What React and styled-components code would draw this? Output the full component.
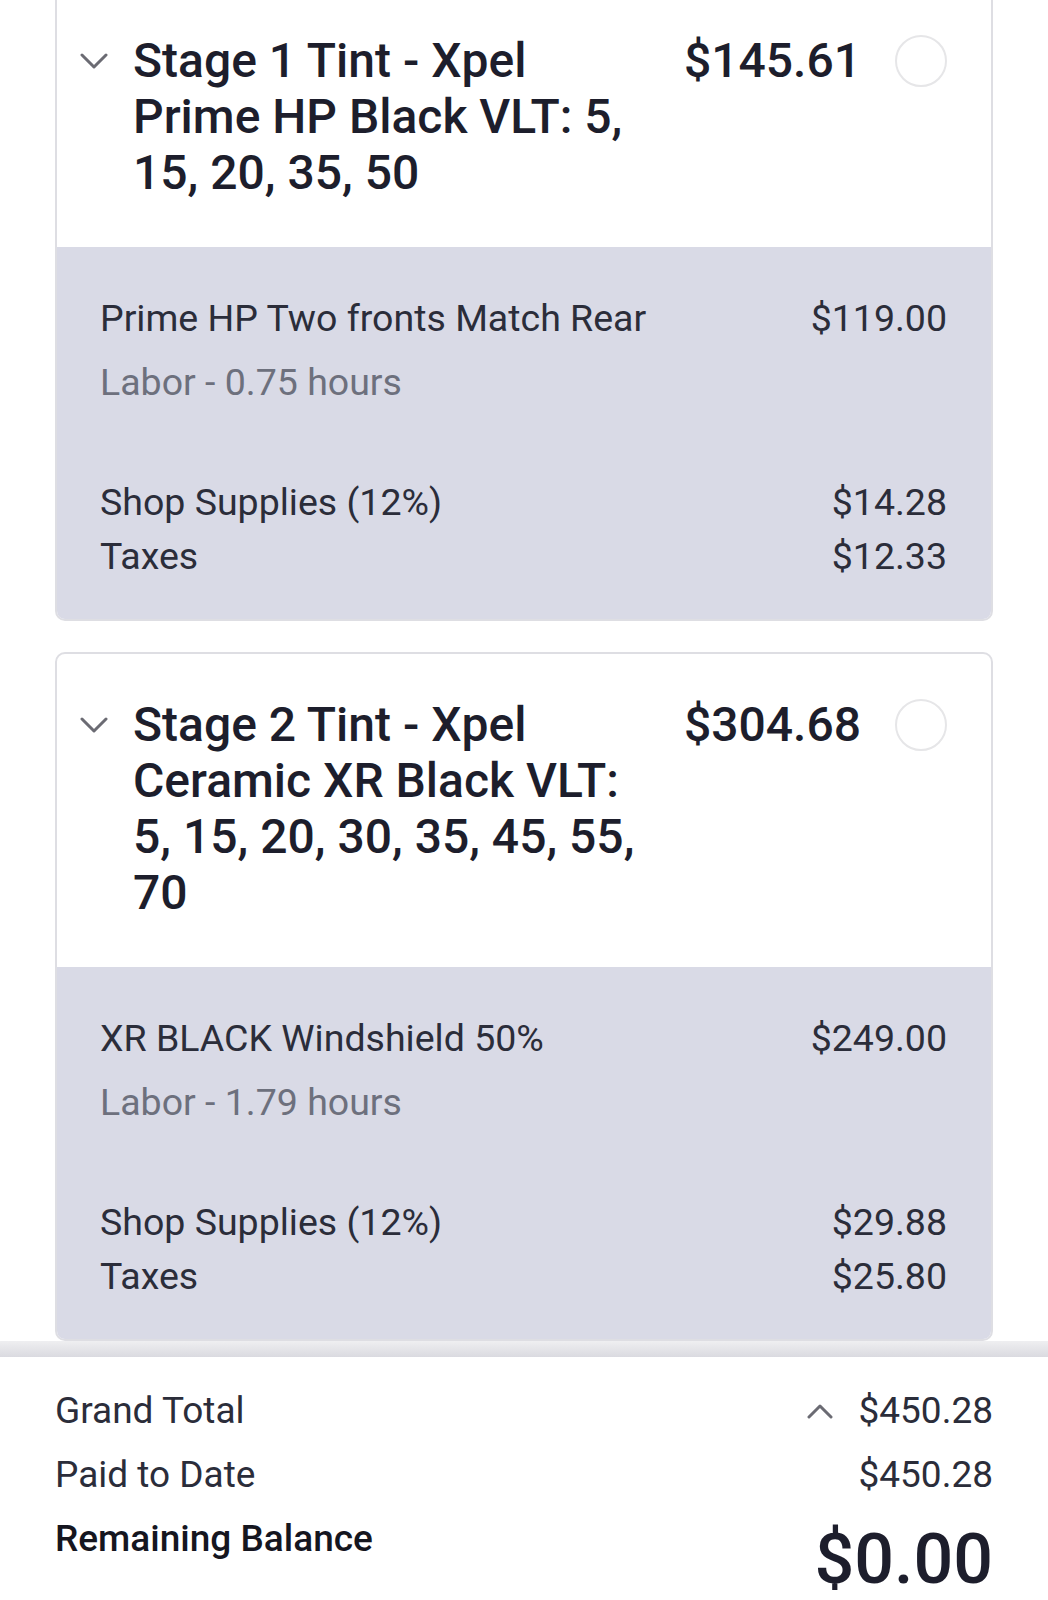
import React from 'react';
import styled, { createGlobalStyle } from 'styled-components';

const GlobalStyle = createGlobalStyle`
  body {
    margin: 0;
    background: #fff;
    font-family: 'Roboto', 'Liberation Sans', sans-serif;
    color: #2b2d3a;
  }
`;

const Page = styled.div`
  width: 1048px;
  min-height: 1600px;
  overflow: hidden;
  display: flex;
  flex-direction: column;
`;

const List = styled.div`
  display: flex;
  flex-direction: column;
  gap: 31px;
  padding: 0 55px;
  margin-top: -12px;
`;

const Card = styled.div`
  border: 2px solid #dedee3;
  border-radius: 10px;
  overflow: hidden;
  background: #fff;
`;

const Header = styled.div`
  display: flex;
  align-items: flex-start;
  padding: 43px 44px 46px 23px;
`;

const Chevron = styled.div`
  width: 28px;
  height: 56px;
  display: flex;
  align-items: center;
  justify-content: center;
  margin-right: 25px;
  color: #6b6b73;
`;

const Title = styled.div`
  flex: 0 0 512px;
  font-size: 48px;
  line-height: 56px;
  font-weight: 500;
  color: #1d1e2c;
`;

const Price = styled.div`
  margin-left: auto;
  font-size: 48px;
  line-height: 56px;
  font-weight: 500;
  color: #1d1e2c;
`;

const Radio = styled.div`
  width: 48px;
  height: 48px;
  border: 2px solid #e6e6e8;
  border-radius: 50%;
  margin: 2px 0 0 34px;
  flex-shrink: 0;
`;

const Body = styled.div`
  background: #d9dae6;
  padding: 49px 44px 36px 43px;
`;

const Row = styled.div`
  display: flex;
  justify-content: space-between;
  font-size: 37.5px;
  line-height: ${(p) => (p.$tight ? '54px' : '44px')};
  color: ${(p) => (p.$muted ? '#6d707d' : '#2b2d3a')};
  margin-top: ${(p) => p.$gap || 0}px;
`;

const Footer = styled.div`
  padding: 48px 55px 0;
  background: linear-gradient(#efeff1, #dadae0) top / 100% 16px no-repeat, #fff;
  display: flex;
  flex-direction: column;
  gap: 20px;
`;

const TotalRow = styled.div`
  display: flex;
  justify-content: space-between;
  align-items: flex-start;
  font-size: 37px;
  line-height: 44px;
  color: ${(p) => (p.$strong ? '#15161f' : '#2b2d3a')};
  font-weight: ${(p) => (p.$strong ? 500 : 400)};
`;

const Amount = styled.div`
  display: flex;
  align-items: center;
  gap: 25px;
  color: #6b6b73;
  & > span {
    color: #2b2d3a;
  }
`;

const BigAmount = styled.div`
  font-size: 70px;
  line-height: 72px;
  font-weight: 500;
  color: #1d1e2c;
  margin-top: 6px;
`;

const ChevronDown = () => (
  <svg width="28" height="16" viewBox="0 0 28 16" fill="none">
    <path d="M2 2L14 14L26 2" stroke="currentColor" strokeWidth="3" strokeLinecap="round" strokeLinejoin="round" />
  </svg>
);

const ChevronUp = () => (
  <svg width="26" height="16" viewBox="0 0 26 16" fill="none">
    <path d="M2 14L13 3L24 14" stroke="currentColor" strokeWidth="3" strokeLinecap="round" strokeLinejoin="round" />
  </svg>
);

const services = [
  {
    title: 'Stage 1 Tint - Xpel Prime HP Black VLT: 5, 15, 20, 35, 50',
    price: '$145.61',
    item: 'Prime HP Two fronts Match Rear',
    itemPrice: '$119.00',
    labor: 'Labor - 0.75 hours',
    supplies: '$14.28',
    taxes: '$12.33',
  },
  {
    title: 'Stage 2 Tint - Xpel Ceramic XR Black VLT: 5, 15, 20, 30, 35, 45, 55, 70',
    price: '$304.68',
    item: 'XR BLACK Windshield 50%',
    itemPrice: '$249.00',
    labor: 'Labor - 1.79 hours',
    supplies: '$29.88',
    taxes: '$25.80',
  },
];

const ServiceCard = ({ s }) => (
  <Card>
    <Header>
      <Chevron>
        <ChevronDown />
      </Chevron>
      <Title>{s.title}</Title>
      <Price>{s.price}</Price>
      <Radio />
    </Header>
    <Body>
      <Row>
        <span>{s.item}</span>
        <span>{s.itemPrice}</span>
      </Row>
      <Row $muted $gap={20}>
        <span>{s.labor}</span>
      </Row>
      <Row $tight $gap={71}>
        <span>Shop Supplies (12%)</span>
        <span>{s.supplies}</span>
      </Row>
      <Row $tight>
        <span>Taxes</span>
        <span>{s.taxes}</span>
      </Row>
    </Body>
  </Card>
);

const App = () => {
  return (
    <Page>
      <GlobalStyle />
      <List>
        {services.map((s) => (
          <ServiceCard key={s.price} s={s} />
        ))}
      </List>
      <Footer>
        <TotalRow>
          <span>Grand Total</span>
          <Amount>
            <ChevronUp />
            <span>$450.28</span>
          </Amount>
        </TotalRow>
        <TotalRow>
          <span>Paid to Date</span>
          <span>$450.28</span>
        </TotalRow>
        <TotalRow $strong>
          <span>Remaining Balance</span>
          <BigAmount>$0.00</BigAmount>
        </TotalRow>
      </Footer>
    </Page>
  );
};

export default App;
